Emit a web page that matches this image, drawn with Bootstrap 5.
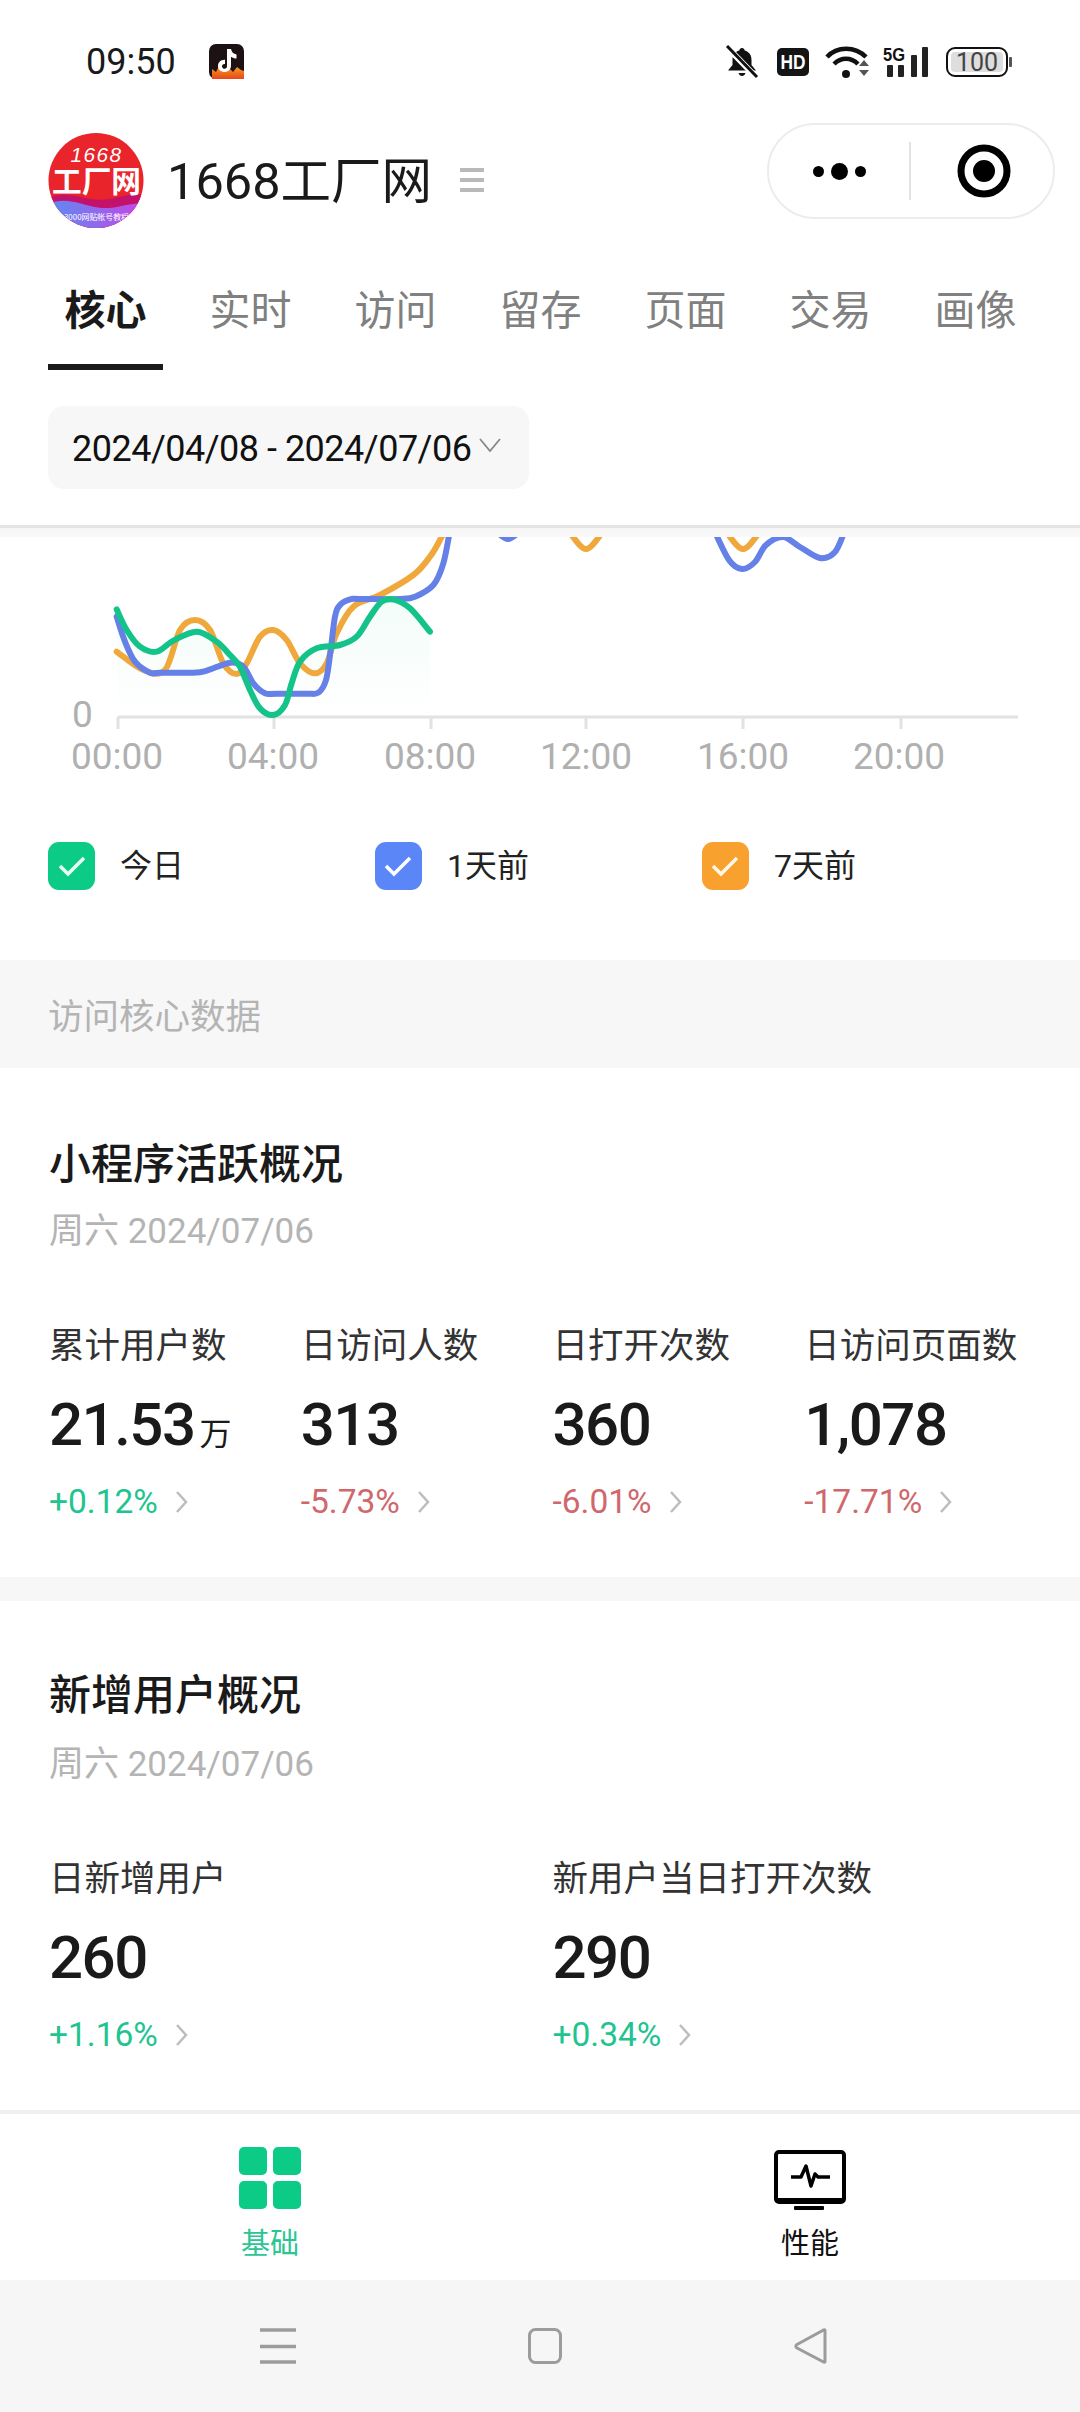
<!DOCTYPE html>
<html lang="zh-CN">
<head>
  <meta charset="UTF-8">
  <meta name="viewport" content="width=device-width, initial-scale=1.0">
  <title>1668工厂网</title>
  <link rel="stylesheet" href="https://cdn.jsdelivr.net/npm/bootstrap@5.3.3/dist/css/bootstrap.min.css">
  <style>
    html, body { width: 1080px; height: 2412px; overflow: hidden; }
    body { font-family: Roboto, "Noto Sans CJK SC", sans-serif; color: #1a1a1a; background: #fff; }
    svg { display: block; flex: none; }

    .status-bar { height: 123px; padding: 0 68px 0 86px; }
    .status-time { font-size: 36px; line-height: 40px; margin-top: 1px; width: 123px; }
    .st-hd { margin-left: 18px; }
    .st-wifi { margin-left: 16px; }
    .st-net { margin-left: 12px; }
    .st-batt { margin-left: 17px; }

    .app-head { height: 96px; padding: 0 25px 0 48px; }
    .app-logo { margin-top: 9px; }
    .app-name { font-size: 50.500px; line-height: 60px; margin: 29px 0 0 23px; }
    .app-menu { margin: 45px 0 0 28px; width: 24px; }
    .capsule { width: 288px; height: 96px; border: 2px solid #ececec; border-radius: 48px; }
    .capsule-left { width: 142px; height: 58px; border-right: 2px solid #e2e2e2; }
    .capsule-dot { background: #000; border-radius: 50%; width: 11px; height: 11px; }
    .capsule-dot.big { width: 17px; height: 17px; margin: 0 7px; }
    .capsule-right { width: 142px; padding-left: 4px; }

    .tab-strip { padding: 62px 0 0 48px; gap: 30px; flex-wrap: nowrap; }
    .tab-item { width: 115px; font-size: 41px; line-height: 60px; padding: 0 0 23px; text-align: center; color: #808080; border-bottom: 6px solid transparent; }
    .tab-item.active { color: #1a1a1a; font-weight: 700; border-bottom-color: #1a1a1a; }

    .date-pill { margin: 36px 0 36px 48px; width: 481px; height: 83px; background: #f7f7f7; border-radius: 16px; padding: 2px 0 0 24px; font-size: 36px; letter-spacing: -.5px; color: #111; }
    .date-pill svg { margin: -8px 0 0 8px; }

    .head-fade { height: 12px; background: linear-gradient(#e4e4e4 0, #e4e4e4 3px, #f6f6f6 3px, #f9f9f9 100%); }

    .chart-text { font-family: Roboto, sans-serif; font-size: 37px; fill: #b0b0b0; }

    .legend-row { width: 981px; margin: 42px 0 70px 48px; }
    .legend-box { width: 47px; height: 48px; border-radius: 11px; margin-right: 25px; }
    .legend-label { font-size: 32px; line-height: 48px; color: #222; }
    .box-green { background: #0ccb87; }
    .box-blue { background: #5b86f8; }
    .box-orange { background: #f9a12f; }

    .band-title { height: 108px; background: #f7f7f7; padding: 8px 0 0 48px; font-size: 35.500px; color: #b4b4b4; }

    .stats-block { padding: 67px 24px 0 49px; height: 509px; }
    .stats-block.second { padding-top: 65px; }
    .block-title { font-size: 42px; line-height: 60px; font-weight: 500; color: #1a1a1a; }
    .block-date { font-size: 35px; line-height: 50px; color: #b4b4b4; margin-top: 12px; }
    .second .block-date { margin-top: 14px; }
    .metric-label { font-size: 35.500px; line-height: 50px; color: #333; margin-top: 64px; white-space: nowrap; }
    .metric-value { height: 80px; font-size: 60px; line-height: 80px; font-weight: 500; letter-spacing: -1.500px; margin-top: 14px; color: #1a1a1a; white-space: nowrap; }
    .metric-unit { font-size: 32px; font-weight: 400; margin-left: 5px; letter-spacing: 0; line-height: 1; }
    .metric-change { font-size: 33.500px; line-height: 50px; margin-top: 12px; gap: 18px; }
    .up { color: #21c48f; }
    .down { color: #cf686c; }

    .gap-band { height: 24px; background: #f7f7f7; }

    .bottom-tabs { height: 170px; border-top: 4px solid #f0f0f0; }
    .bottom-tab { font-size: 29px; line-height: 36px; padding-top: 36px; color: #111; }
    .bottom-tab.active { color: #2cc594; padding-top: 33px; }
    .bottom-tab span { display: block; margin-top: 16px; }
    .bottom-tab.active span { margin-top: 17px; }

    .sys-nav { height: 132px; background: #f6f6f6; padding-left: 7px; gap: 232px; }
  </style>
</head>
<body>

  <!-- status bar -->
  <div class="status-bar d-flex align-items-center justify-content-between">
    <div class="d-flex align-items-center">
      <div class="status-time">09:50</div>
      <svg width="35" height="35" viewBox="0 0 35 35">
        <defs><linearGradient id="flame" x1="0" y1="0" x2="0" y2="1"><stop offset="0" stop-color="#f7a11d"/><stop offset="1" stop-color="#e8461c"/></linearGradient></defs>
        <rect width="35" height="35" rx="7" fill="#1c1113"/>
        <path d="M3 35v-10l4 3 3-6 4 5 6-3 4 4 4-5 4 3 3 1v8z" fill="url(#flame)"/>
        <path d="M18 5h4c.5 3 2.500 5 5.500 5.500v4c-2 0-4-.7-5.500-1.800v8.800c0 4-3 6.500-6.500 6.500S9 25.500 9 22s3-6.500 7-6.200v4.200c-1.800-.4-3 .7-3 2.200s1.200 2.600 2.600 2.600 2.400-1 2.400-2.800z" fill="#fff"/>
      </svg>
    </div>
    <div class="d-flex align-items-center">
      <svg width="34" height="34" viewBox="0 0 34 34">
        <path d="M17 3c-1.500 0-2.500 1-2.700 2.500C9.500 6.800 7.500 10.500 7.500 15v5L3 25.500h28L26.500 20v-5c0-4.500-2-8.200-6.800-9.500C19.500 4 18.500 3 17 3z" fill="#111"/>
        <path d="M13.500 28c.5 2 2 3 3.500 3s3-1 3.500-3z" fill="#111"/>
        <path d="M2 2l30 31" stroke="#fff" stroke-width="6"/>
        <path d="M2 1l30 31" stroke="#111" stroke-width="3"/>
      </svg>
      <svg class="st-hd" width="32" height="28" viewBox="0 0 32 28">
        <rect width="32" height="28" rx="5" fill="#141414"/>
        <text x="16" y="21" text-anchor="middle" font-family="Liberation Sans, sans-serif" font-size="20" font-weight="700" fill="#fff" textLength="25" lengthAdjust="spacingAndGlyphs">HD</text>
      </svg>
      <svg class="st-wifi" width="46" height="34" viewBox="0 0 46 34">
        <path d="M2 12C12 1 30 1 41 12" fill="none" stroke="#111" stroke-width="4.500"/>
        <path d="M9 19c7-7 17-7 24 0" fill="none" stroke="#111" stroke-width="4.500"/>
        <circle cx="21" cy="29" r="4" fill="#111"/>
        <path d="M34 21l5-6 5 6zM34 25l5 6 5-6z" fill="#555"/>
      </svg>
      <svg class="st-net" width="46" height="32" viewBox="0 0 46 32">
        <text x="0" y="15" font-family="Liberation Sans, sans-serif" font-size="18" font-weight="700" fill="#111" textLength="22" lengthAdjust="spacingAndGlyphs">5G</text>
        <rect x="4" y="19" width="6" height="12" rx="1" fill="#222"/>
        <rect x="15" y="19" width="6" height="12" rx="1" fill="#222"/>
        <rect x="28" y="9" width="6" height="22" rx="1" fill="#222"/>
        <rect x="39" y="1" width="6" height="30" rx="1" fill="#222"/>
      </svg>
      <svg class="st-batt" width="66" height="30" viewBox="0 0 66 30">
        <rect x="1" y="1" width="60" height="28" rx="8" fill="#fff" stroke="#111" stroke-width="2"/>
        <rect x="5" y="5" width="52" height="20" rx="4" fill="#dedede"/>
        <rect x="63" y="10" width="3" height="10" rx="1" fill="#555"/>
        <text x="31" y="24" text-anchor="middle" font-family="Roboto, sans-serif" font-size="25" fill="#444">100</text>
      </svg>
    </div>
  </div>

  <!-- app title and capsule -->
  <div class="app-head d-flex">
    <svg class="app-logo" width="96" height="97" viewBox="0 0 97 97">
      <defs>
        <clipPath id="logoClip"><circle cx="48.500" cy="48.500" r="48"/></clipPath>
        <linearGradient id="logoWave" x1="0" y1="0" x2="1" y2="0"><stop offset="0" stop-color="#5c8cf2"/><stop offset="1" stop-color="#c545e6"/></linearGradient>
      </defs>
      <g clip-path="url(#logoClip)">
        <rect width="97" height="97" fill="#e9242b"/>
        <path d="M0 66c20-8 35 2 52 2s30-8 45-5v34H0z" fill="#c2126b"/>
        <path d="M0 72c20-8 35 2 52 4s30-6 45-4v25H0z" fill="url(#logoWave)"/>
        <text x="49" y="30" text-anchor="middle" font-family="Liberation Sans, sans-serif" font-style="italic" font-size="21" letter-spacing="1.500" fill="#fff">1668</text>
        <text x="49" y="60" text-anchor="middle" font-family="Noto Sans CJK SC, sans-serif" font-weight="700" font-size="30" fill="#fff">工厂网</text>
        <text x="49" y="88" text-anchor="middle" font-family="Noto Sans CJK SC, sans-serif" font-size="8" fill="#fff">3000网贴帐号教程</text>
      </g>
    </svg>
    <div class="app-name">1668工厂网</div>
    <svg class="app-menu" width="24" height="24" viewBox="0 0 24 24">
      <path d="M0 2h24M0 12h24M0 22h24" stroke="#b9b9b9" stroke-width="4"/>
    </svg>
    <div class="capsule d-flex align-items-center ms-auto">
      <div class="capsule-left d-flex align-items-center justify-content-center">
        <i class="capsule-dot"></i><i class="capsule-dot big"></i><i class="capsule-dot"></i>
      </div>
      <div class="capsule-right d-flex justify-content-center">
        <svg width="54" height="54" viewBox="0 0 54 54">
          <circle cx="27" cy="27" r="23" fill="none" stroke="#000" stroke-width="7"/>
          <circle cx="27" cy="27" r="11" fill="#000"/>
        </svg>
      </div>
    </div>
  </div>

  <!-- tabs -->
  <ul class="nav tab-strip list-unstyled mb-0">
    <li class="tab-item active">核心</li>
    <li class="tab-item">实时</li>
    <li class="tab-item">访问</li>
    <li class="tab-item">留存</li>
    <li class="tab-item">页面</li>
    <li class="tab-item">交易</li>
    <li class="tab-item">画像</li>
  </ul>

  <div class="date-pill d-flex align-items-center">
    <span>2024/04/08 - 2024/07/06</span>
    <svg width="22" height="14" viewBox="0 0 22 14"><path d="M1 1l10 12L21 1" fill="none" stroke="#888" stroke-width="1.800"/></svg>
  </div>
  <div class="head-fade"></div>

  <!-- chart, scrolled under the header -->
  <svg width="1080" height="263" viewBox="0 537 1080 263">
    <defs><linearGradient id="todayFade" x1="0" y1="600" x2="0" y2="717" gradientUnits="userSpaceOnUse"><stop offset="0" stop-color="#0ccb87" stop-opacity=".05"/><stop offset="1" stop-color="#0ccb87" stop-opacity="0"/></linearGradient></defs>
    <path id="fillToday" fill="url(#todayFade)"/>
    <path d="M118 717H1018" stroke="#e2e2e2" stroke-width="3"/>
    <path d="M118 717v12M274 717v12M431 717v12M586 717v12M743 717v12M901 717v12" stroke="#e2e2e2" stroke-width="3"/>
    <path id="lineWeek" fill="none" stroke="#f0a83c" stroke-width="6" stroke-linecap="round"/>
    <path id="lineWeekB" fill="none" stroke="#f0a83c" stroke-width="6"/>
    <path id="lineWeekC" fill="none" stroke="#f0a83c" stroke-width="6"/>
    <path id="lineDay" fill="none" stroke="#6580e6" stroke-width="6" stroke-linecap="round"/>
    <path id="lineDayB" fill="none" stroke="#6580e6" stroke-width="6"/>
    <path id="lineDayC" fill="none" stroke="#6580e6" stroke-width="6"/>
    <path id="lineToday" fill="none" stroke="#14c38a" stroke-width="6" stroke-linecap="round"/>
    <text class="chart-text" x="72" y="727">0</text>
    <text class="chart-text" x="117" y="769" text-anchor="middle">00:00</text>
    <text class="chart-text" x="273" y="769" text-anchor="middle">04:00</text>
    <text class="chart-text" x="430" y="769" text-anchor="middle">08:00</text>
    <text class="chart-text" x="586" y="769" text-anchor="middle">12:00</text>
    <text class="chart-text" x="743" y="769" text-anchor="middle">16:00</text>
    <text class="chart-text" x="899" y="769" text-anchor="middle">20:00</text>
  </svg>

  <div class="row g-0 legend-row">
    <div class="col-4 d-flex align-items-center">
      <div class="legend-box d-flex align-items-center justify-content-center box-green">
        <svg width="30" height="24" viewBox="0 0 30 24"><path d="M3 12l8 8L27 4" fill="none" stroke="#e6fff6" stroke-width="3.500"/></svg>
      </div>
      <span class="legend-label">今日</span>
    </div>
    <div class="col-4 d-flex align-items-center">
      <div class="legend-box d-flex align-items-center justify-content-center box-blue">
        <svg width="30" height="24" viewBox="0 0 30 24"><path d="M3 12l8 8L27 4" fill="none" stroke="#fff" stroke-width="3.500"/></svg>
      </div>
      <span class="legend-label">1天前</span>
    </div>
    <div class="col-4 d-flex align-items-center">
      <div class="legend-box d-flex align-items-center justify-content-center box-orange">
        <svg width="30" height="24" viewBox="0 0 30 24"><path d="M3 12l8 8L27 4" fill="none" stroke="#fff8e6" stroke-width="3.500"/></svg>
      </div>
      <span class="legend-label">7天前</span>
    </div>
  </div>

  <div class="band-title d-flex align-items-center">访问核心数据</div>

  <section class="stats-block">
    <div class="block-title">小程序活跃概况</div>
    <div class="block-date">周六 2024/07/06</div>
    <div class="row g-0">
      <div class="col-3">
        <div class="metric-label">累计用户数</div>
        <div class="metric-value">21.53<span class="metric-unit">万</span></div>
        <div class="metric-change d-flex align-items-center up">+0.12%<svg width="12" height="22" viewBox="0 0 12 22"><path d="M1 1l9 10-9 10" fill="none" stroke="#bdbdbd" stroke-width="2.500"/></svg></div>
      </div>
      <div class="col-3">
        <div class="metric-label">日访问人数</div>
        <div class="metric-value">313</div>
        <div class="metric-change d-flex align-items-center down">-5.73%<svg width="12" height="22" viewBox="0 0 12 22"><path d="M1 1l9 10-9 10" fill="none" stroke="#bdbdbd" stroke-width="2.500"/></svg></div>
      </div>
      <div class="col-3">
        <div class="metric-label">日打开次数</div>
        <div class="metric-value">360</div>
        <div class="metric-change d-flex align-items-center down">-6.01%<svg width="12" height="22" viewBox="0 0 12 22"><path d="M1 1l9 10-9 10" fill="none" stroke="#bdbdbd" stroke-width="2.500"/></svg></div>
      </div>
      <div class="col-3">
        <div class="metric-label">日访问页面数</div>
        <div class="metric-value">1,078</div>
        <div class="metric-change d-flex align-items-center down">-17.71%<svg width="12" height="22" viewBox="0 0 12 22"><path d="M1 1l9 10-9 10" fill="none" stroke="#bdbdbd" stroke-width="2.500"/></svg></div>
      </div>
    </div>
  </section>

  <div class="gap-band"></div>

  <section class="stats-block second">
    <div class="block-title">新增用户概况</div>
    <div class="block-date">周六 2024/07/06</div>
    <div class="row g-0">
      <div class="col-6">
        <div class="metric-label">日新增用户</div>
        <div class="metric-value">260</div>
        <div class="metric-change d-flex align-items-center up">+1.16%<svg width="12" height="22" viewBox="0 0 12 22"><path d="M1 1l9 10-9 10" fill="none" stroke="#bdbdbd" stroke-width="2.500"/></svg></div>
      </div>
      <div class="col-6">
        <div class="metric-label">新用户当日打开次数</div>
        <div class="metric-value">290</div>
        <div class="metric-change d-flex align-items-center up">+0.34%<svg width="12" height="22" viewBox="0 0 12 22"><path d="M1 1l9 10-9 10" fill="none" stroke="#bdbdbd" stroke-width="2.500"/></svg></div>
      </div>
    </div>
  </section>

  <!-- bottom tab bar -->
  <div class="row g-0 bottom-tabs">
    <div class="col-6 bottom-tab active d-flex flex-column align-items-center">
      <svg width="62" height="62" viewBox="0 0 62 62">
        <rect width="28" height="28" rx="5" fill="#0ccb87"/><rect x="34" width="28" height="28" rx="5" fill="#0ccb87"/>
        <rect y="34" width="28" height="28" rx="5" fill="#0ccb87"/><rect x="34" y="34" width="28" height="28" rx="5" fill="#0ccb87"/>
      </svg>
      <span>基础</span>
    </div>
    <div class="col-6 bottom-tab d-flex flex-column align-items-center">
      <svg width="72" height="60" viewBox="0 0 72 60">
        <rect x="2" y="2" width="68" height="50" rx="3" fill="none" stroke="#000" stroke-width="4"/>
        <path d="M2 50h68" stroke="#000" stroke-width="4"/>
        <rect x="20" y="56" width="30" height="4" rx="1" fill="#000"/>
        <path d="M17 27h10l5-11 5 20 4-12 3 3h12" fill="none" stroke="#000" stroke-width="3.500" stroke-linejoin="round"/>
      </svg>
      <span>性能</span>
    </div>
  </div>

  <!-- system navigation -->
  <div class="sys-nav d-flex align-items-center justify-content-center">
    <svg width="36" height="36" viewBox="0 0 36 36"><path d="M0 2h36M0 18.500h36M0 34h36" stroke="#9c9c9c" stroke-width="3.500"/></svg>
    <svg width="34" height="36" viewBox="0 0 34 36"><rect x="1.500" y="1.500" width="31" height="33" rx="6" fill="none" stroke="#9c9c9c" stroke-width="3"/></svg>
    <svg width="34" height="36" viewBox="0 0 34 36"><path d="M31 2.500v31c0 .8-1 1-1.500.5L3 20c-1.500-1-1.500-2.500 0-3.500L29.500 2c.5-.5 1.500-.3 1.500.5z" fill="none" stroke="#9c9c9c" stroke-width="3"/></svg>
  </div>

  <script src="https://cdn.jsdelivr.net/npm/bootstrap@5.3.3/dist/js/bootstrap.bundle.min.js"></script>
  <script>
    // smooth line through sampled points (catmull-rom to bezier)
    function smooth(pts) {
      let d = `M${pts[0][0]} ${pts[0][1]}`;
      for (let i = 0; i < pts.length - 1; i++) {
        const p0 = pts[i - 1] || pts[i], p1 = pts[i], p2 = pts[i + 1], p3 = pts[i + 2] || p2;
        const c1x = p1[0] + (p2[0] - p0[0]) / 6, c1y = p1[1] + (p2[1] - p0[1]) / 6;
        const c2x = p2[0] - (p3[0] - p1[0]) / 6, c2y = p2[1] - (p3[1] - p1[1]) / 6;
        d += `C${c1x} ${c1y} ${c2x} ${c2y} ${p2[0]} ${p2[1]}`;
      }
      return d;
    }
    // samples were read off a 3x crop starting at (60,520)
    const crop = pts => pts.map(p => [60 + p[0] / 3, 520 + p[1] / 3]);

    const today = crop([[170,268],[200,330],[240,380],[290,395],[340,362],[410,335],[470,365],[510,405],[540,440],[570,510],[600,565],[640,585],[675,555],[695,490],[720,425],[770,385],[840,375],[890,350],[930,290],[965,245],[1000,238],[1050,265],[1110,335]]);
    const week = crop([[170,395],[250,450],[315,450],[360,330],[405,300],[450,330],[490,430],[530,462],[560,430],[600,350],[640,330],[680,360],[720,430],[765,460],[800,430],[830,340],[880,260],[960,225],[1060,165],[1110,110],[1140,60],[1170,0]]);
    const day = crop([[170,290],[195,365],[225,425],[270,458],[300,458],[400,458],[440,452],[510,428],[550,440],[580,490],[615,520],[650,521],[740,521],[775,518],[798,480],[812,390],[825,290],[840,255],[870,238],[900,237],[1020,237],[1065,230],[1120,195],[1150,130],[1170,30]]);

    document.getElementById('lineToday').setAttribute('d', smooth(today));
    document.getElementById('lineWeek').setAttribute('d', smooth(week));
    document.getElementById('lineDay').setAttribute('d', smooth(day));
    document.getElementById('fillToday').setAttribute('d', smooth(today) + 'L430 717L118 717Z');

    // the bits that dip below the header further right
    document.getElementById('lineWeekB').setAttribute('d', smooth([[568,530],[586,549],[604,530]]));
    document.getElementById('lineWeekC').setAttribute('d', smooth([[725,530],[743,549],[761,530]]));
    document.getElementById('lineDayB').setAttribute('d', smooth([[490,525],[508,539],[526,525]]));
    document.getElementById('lineDayC').setAttribute('d', smooth([[714,530],[729,560],[742,569],[755,562],[766,545],[783,537],[800,547],[820,558],[835,552],[845,530]]));
  </script>
</body>
</html>
